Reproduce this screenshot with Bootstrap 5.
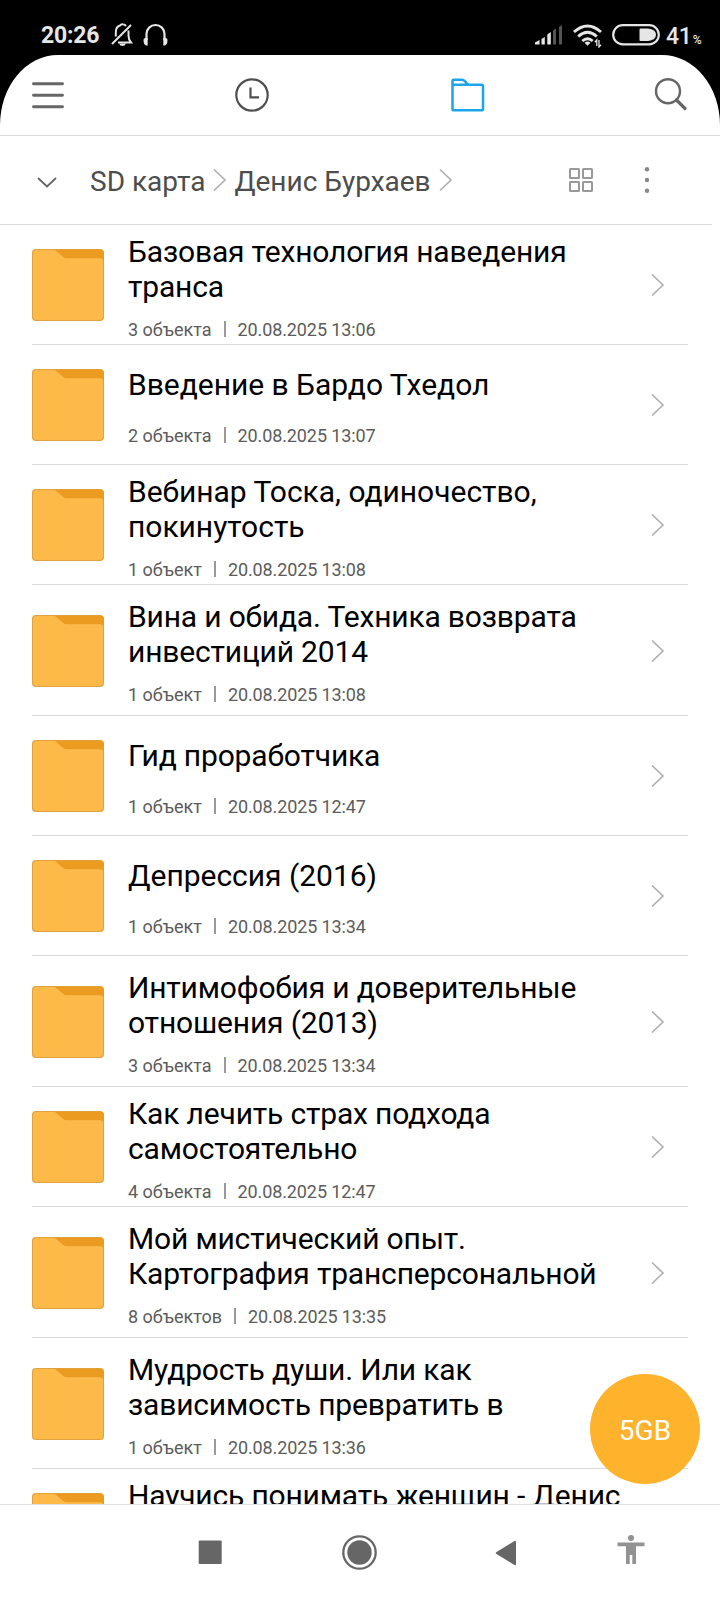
<!DOCTYPE html>
<html lang="ru">
<head>
<meta charset="utf-8">
<meta name="viewport" content="width=device-width, initial-scale=1">
<title>Денис Бурхаев</title>
<link href="https://cdn.jsdelivr.net/npm/bootstrap@5.3.0/dist/css/bootstrap.min.css" rel="stylesheet">
<style>
html,body{height:1600px;overflow:hidden}
body{font-family:Roboto,"Noto Sans",sans-serif;background:#fff;color:#000}
svg{display:block;flex:none}
.screen{width:720px;height:1600px}
.top-black{background:#000;height:135px}
.status{height:55px;padding:16px 19px 0 41px;color:#e6e6e6}
.clock-text{font-size:23px;font-weight:700;line-height:39px;width:59px;letter-spacing:-.2px}
.pct{font-size:23px;font-weight:500;line-height:41px;letter-spacing:-.2px;white-space:nowrap;width:35px}
.pct small{font-size:12px;margin-left:1px;letter-spacing:0}
.tabs-bar{height:80px;background:#fff;border-radius:58px 58px 0 0/70px 70px 0 0;padding:0 32px}
.crumbs{height:90px;border-top:1px solid #d9d9d9;color:#4d4d4d;font-size:28px;line-height:33px;padding-left:36px}
.crumb-line{height:1px;width:712px;margin-top:-1px;background:#d9d9d9}
.files{height:1279px;padding:0 32px}
.file{height:120px;border-bottom:1px solid #d9d9d9;--o:24px;--t:9px;--g:15px;--ls:-.17px}
.file.tall{height:131px;--o:30px;--t:14px}
.file.single{--t:22px;--g:23px}
.file.loose{--ls:-.02px}
.file>svg{margin-top:var(--o)}
.file>svg.arrow{margin-top:calc(var(--o) + 24px);margin-right:23px}
.info{padding-top:var(--t);margin-left:24px;white-space:nowrap}
.name{font-size:30px;line-height:35px;letter-spacing:var(--ls)}
.meta{margin-top:var(--g);font-size:18px;line-height:21px;color:#5c5c5c}
.meta .when{letter-spacing:-.11px}
.bar{width:2px;height:16px;background:#999;margin:2px 12px 0 12px}
.fab{right:20px;top:1374px;width:110px;height:110px;background:#ffb32c;color:#fff;font-size:28px;line-height:110px;padding-top:2px!important}
.sysnav{height:96px;border-top:1px solid #e2e2e2;background:#fff}
</style>
</head>
<body>
<svg width="0" height="0" class="position-absolute">
<symbol id="folder" viewBox="0 0 72 72"><rect width="72" height="72" rx="4" fill="#e0a23f"/><path d="M1 5a4 4 0 0 1 4-4h18l9 7.500q1 .8 3 .8h33q3 0 3 2V67a4 4 0 0 1-4 4H5a4 4 0 0 1-4-4z" fill="#fdba49"/><path d="M23 .8h45a4 4 0 0 1 4 4V11q-1-2-4-2H35q-2 0-3-.8z" fill="#eb9b20"/></symbol>
<symbol id="chev" viewBox="0 0 14 24"><path d="M1 1.500 12 12 1 22.500" fill="none" stroke="#b0b0b0" stroke-width="1.700"/></symbol>
</svg>
<div class="screen d-flex flex-column position-relative overflow-hidden">
<header class="top-black flex-shrink-0">
<div class="status d-flex align-items-start">
<div class="clock-text">20:26</div>
<svg width="23" height="24" viewBox="0 0 23 24" style="margin:7px 0 0 11px"><g fill="none" stroke="#e6e6e6" stroke-width="2"><path d="M1 21 20 2M4.800 13.500V9.500C4.800 5.500 7 3 9 2.500q1-1.500 3-1.200 1.500 0 3 1.700M17.500 7.500v5q0 4 2.500 7H7"/></g><path d="M8 20.500h7q-1 2.500-3.500 2.500T8 20.500z" fill="#e6e6e6"/></svg>
<svg width="25" height="24" viewBox="0 0 25 24" style="margin:7px 0 0 9px"><path d="M3.500 17V11a9 9 0 0 1 18 0v6" fill="none" stroke="#e6e6e6" stroke-width="2.200"/><path d="M.5 17q0-2 2-2h2.200v7.500H3q-2.500-1-2.500-5.500zM24.500 17q0-2-2-2h-2.200v7.500H22q2.500-1 2.500-5.500z" fill="#e6e6e6"/></svg>
<div class="ms-auto d-flex">
<svg width="30" height="22" viewBox="0 0 30 22" style="margin:8px 9px 0 0"><g fill="#e6e6e6"><path d="M1 18.500 5.500 16v4.500H1zM7.500 15l3.300-2v7.500H7.500zM13.300 10.500l3.500-2.500v12.500h-3.500z"/><path fill="#555" d="M19 6.500l3-2v16h-3zM25 3l3-2v19.500h-3z"/></g></svg>
<svg width="30" height="24" viewBox="0 0 30 24" style="margin:8px 9px 0 0"><g fill="none" stroke="#e6e6e6" stroke-width="2.900"><path d="M1 8q13.500-12 27 0M5.200 12.500q9.300-8.300 18.600 0M9.300 17q5.200-4.600 10.400 0"/></g><path d="m11.500 18.800 3 3 3-3q-3-2.500-6 0z" fill="#e6e6e6"/><path d="M23.800 22v-6l-2 2.200M26 16v7l2-2.200" stroke="#e6e6e6" stroke-width="1.300" fill="none"/></svg>
<svg width="48" height="22" viewBox="0 0 48 22" style="margin:8px 6px 0 0"><rect x="1.200" y="1.200" width="45.600" height="19.200" rx="9.600" fill="none" stroke="#e6e6e6" stroke-width="2.200"/><path d="M28.500 4.500H36q8 1 8 6.200t-8 6.300h-7.500q-1 0-1-1V5.500q0-1 1-1z" fill="#e6e6e6"/></svg>
<div class="pct">41<small>%</small></div>
</div></div>
<nav class="tabs-bar d-flex align-items-start">
<svg width="32" height="28" viewBox="0 0 32 28" style="margin-top:26px"><path d="M1.500 2.800h29M1.500 14.300h29M1.500 25.800h29" stroke="#666" stroke-width="2.900" stroke-linecap="round"/></svg>
<svg width="34" height="34" viewBox="0 0 34 34" style="margin:23px 0 0 171px"><g fill="none" stroke="#4f4f4f" stroke-width="2.200"><circle cx="17" cy="17" r="15.700"/><path d="M15.500 9.500v9.800H24"/></g></svg>
<svg width="36" height="36" viewBox="0 0 36 36" style="margin:22px 0 0 181px"><path d="M2.500 7.800V4q0-1.300 1.300-1.300h8.500Q13.500 2.700 14.500 3.800l3.800 4H31.700q1.300 0 1.300 1.300v22.800q0 1.300-1.300 1.300H3.800Q2.500 33.200 2.500 31.900zM2.500 7.800h16" fill="none" stroke="#1ca5e8" stroke-width="2.500"/></svg>
<svg class="ms-auto" width="34" height="34" viewBox="0 0 34 34" style="margin-top:23px"><g fill="none" stroke="#666" stroke-width="2.400"><circle cx="14" cy="13.200" r="12"/><path d="m22.500 22 8.500 8.500" stroke-width="3.200" stroke-linecap="round"/></g></svg>
</nav>
</header>
<div class="crumbs d-flex flex-shrink-0 align-items-start text-nowrap">
<svg width="22" height="14" viewBox="0 0 22 14" style="margin-top:40px"><path d="m2 2 9 8.500L20 2" fill="none" stroke="#666" stroke-width="1.800"/></svg>
<span style="margin:29px 0 0 32px">SD карта</span>
<svg width="14" height="24" style="margin:32px 0 0 8px"><use href="#chev"/></svg>
<span style="margin:29px 0 0 7px">Денис Бурхаев</span>
<svg width="14" height="24" style="margin:32px 0 0 8px"><use href="#chev"/></svg>
<svg class="ms-auto" width="26" height="26" viewBox="0 0 26 26" style="margin-top:31px"><g fill="none" stroke="#999" stroke-width="2"><rect x="2" y="2" width="9" height="9" rx=".6"/><rect x="15" y="2" width="9" height="9" rx=".6"/><rect x="2" y="15" width="9" height="9" rx=".6"/><rect x="15" y="15" width="9" height="9" rx=".6"/></g></svg>
<svg width="6" height="28" viewBox="0 0 6 28" style="margin:30px 70px 0 50px"><g fill="#888"><circle cx="3" cy="3.300" r="2.200"/><circle cx="3" cy="14" r="2.200"/><circle cx="3" cy="24.700" r="2.200"/></g></svg>
</div>
<div class="crumb-line flex-shrink-0"></div>
<main class="files flex-shrink-0 overflow-hidden" id="files"></main>
<button class="fab btn rounded-circle border-0 position-absolute p-0">5GB</button>
<nav class="sysnav d-flex flex-shrink-0 align-items-start">
<svg width="24" height="24" style="margin:35px 0 0 198px"><rect x=".7" y=".5" width="23" height="23.500" rx="1" fill="#666"/></svg>
<svg width="36" height="36" viewBox="0 0 36 36" style="margin:29px 0 0 119px"><circle cx="18.500" cy="18.500" r="16.200" fill="none" stroke="#666" stroke-width="2.300"/><circle cx="18.500" cy="18.500" r="12.200" fill="#666"/></svg>
<svg width="24" height="28" viewBox="0 0 24 28" style="margin:34px 0 0 117px"><path d="M2.500 13 20.500 2q1.500-.8 1.500.8v22.400q0 1.600-1.500.8L2.500 15q-1.500-1 0-2z" fill="#666"/></svg>
<svg width="28" height="30" viewBox="0 0 28 30" style="margin:30px 0 0 99px"><path d="M.5 7.500h27v3.800H19V29h-3.700v-9h-2.600v9H9V11.300H.5z" fill="#929292"/><circle cx="14" cy="3" r="3" fill="#929292"/></svg>
</nav>
</div>
<script src="https://cdn.jsdelivr.net/npm/bootstrap@5.3.0/dist/js/bootstrap.bundle.min.js"></script>
<script>
const files=[
["","Базовая технология наведения<br>транса","3 объекта","13:06"],
["single loose","Введение в Бардо Тхедол","2 объекта","13:07"],
["loose","Вебинар Тоска, одиночество,<br>покинутость","1 объект","13:08"],
["tall","Вина и обида. Техника возврата<br>инвестиций 2014","1 объект","13:08"],
["single","Гид проработчика","1 объект","12:47"],
["single loose","Депрессия (2016)","1 объект","13:34"],
["tall","Интимофобия и доверительные<br>отношения (2013)","3 объекта","13:34"],
["","Как лечить страх подхода<br>самостоятельно","4 объекта","12:47"],
["tall","Мой мистический опыт.<br>Картография трансперсональной","8 объектов","13:35"],
["tall","Мудрость души. Или как<br>зависимость превратить в","1 объект","13:36"],
["","Научись понимать женщин - Денис","",""]];
document.getElementById("files").innerHTML=files.map(([c,n,o,t])=>`<div class="file ${c} d-flex align-items-start"><svg width="72" height="72"><use href="#folder"/></svg><div class="info flex-grow-1"><div class="name">${n}</div>${o?`<div class="meta d-flex"><span>${o}</span><span class="bar"></span><span class="when">20.08.2025 ${t}</span></div>`:""}</div><svg class="arrow" width="14" height="24"><use href="#chev"/></svg></div>`).join("");
</script>
</body>
</html>
